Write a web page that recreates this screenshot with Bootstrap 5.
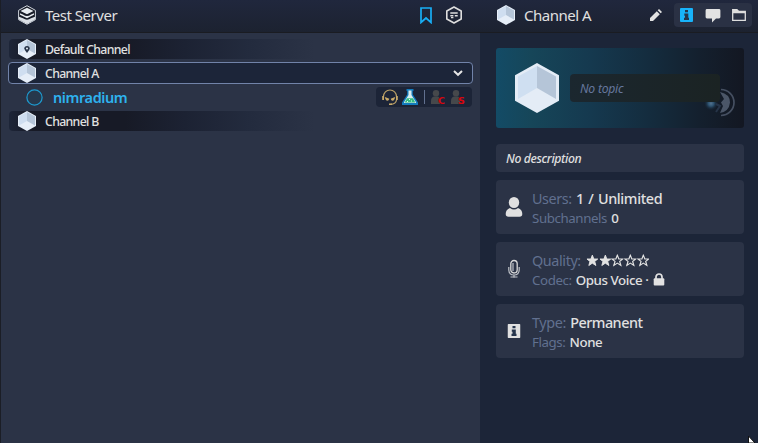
<!DOCTYPE html>
<html lang="en">
<head>
<meta charset="utf-8">
<meta name="viewport" content="width=device-width, initial-scale=1">
<title>Test Server</title>
<link href="https://cdn.jsdelivr.net/npm/bootstrap@5.3.0/dist/css/bootstrap.min.css" rel="stylesheet">
<style>
body{width:758px;height:443px;background:#1c2538;color:#e0e0e0;font-family:"Noto Sans","Open Sans",sans-serif;font-size:13px;line-height:18px}
svg{display:block;flex:none}
.tree-pane{width:480px;background:#2b3346;border-left:1px solid #1b1e26}
.bar{height:33px;background:linear-gradient(#20273d,#1c2230);border-bottom:1px solid #1a1c22}
.bar-title{font-size:15px;letter-spacing:-.48px;margin-left:9px;white-space:nowrap}
.tree-pane .bar{padding:0 17px 2px 17px}
.info-pane .bar{padding:0 6px 2px 17px}
.hex-btn{margin-left:13px}
.tree{padding:5px 7px}
.chan{height:20px;margin:1px 1px 3px;padding-left:9px;border-radius:4px;font-size:12.3px;letter-spacing:-.66px;background:linear-gradient(90deg,#1d2538 0,#171a26 5%,#171a26 25%,#1c2233 38%,#232b3e 52%,#2b3346 66%)}
.chan.selected{height:22px;margin:0 0 2px;border:1px solid #7183a9;background:#1c2539}
.chan-name{margin-left:9px;padding-top:2px;font-weight:500}
.client{height:22px;margin:0 1px 3px 18px}
.client-name{font-size:14.5px;font-weight:600;letter-spacing:-.42px;color:#2eb2ee;margin-left:10px}
.badges{height:20px;width:96px;background:#1c2437;border-radius:4px;padding:0 6px}
.badge-sep{width:1px;height:14px;background:#61708f}
.tabs{background:#2a3144;border-radius:4px;width:78px;height:24px;margin-left:12px;padding:0 6px}
.tab-active{color:#18b3fa}
.info-body{padding:15px 14px 0 16px}
.banner{height:80px;border-radius:3px;background:linear-gradient(90deg,#134b66 0,#164659 14%,#15394f 38%,#142c3e 62%,#14202e 82%,#131722 100%);padding-left:18px}
.topic{width:150px;height:28px;margin-left:10px;border-radius:4px;background:linear-gradient(90deg,#1b272f,#1b2323);color:#66779d;font-size:12.2px;letter-spacing:-.25px;padding:2px 0 0 10px;z-index:1}
.banner-mark{right:7px;top:39px}
.panel{background:#2b3346;border-radius:4px}
.desc{height:28px;margin-top:16px;padding:2px 0 0 10px;font-size:12.2px;font-weight:500;letter-spacing:-.36px}
.stat{height:54px;margin-top:8px;padding-left:9px}
.stat-text{margin-left:9px;padding-top:1px;white-space:nowrap}
.line1{font-size:14.4px;letter-spacing:-.5px;line-height:20px;font-weight:500}
.line2{font-size:13.3px;letter-spacing:-.42px;line-height:18px;font-weight:500}
.key{color:#61708f;font-weight:400;letter-spacing:-.4px;margin-right:1px}
.users{word-spacing:1px;letter-spacing:-.36px}
.stars{margin-left:4px}
.lock{margin-left:5px}
</style>
<script src="https://cdn.jsdelivr.net/npm/bootstrap@5.3.0/dist/js/bootstrap.bundle.min.js"></script>
</head>
<body class="d-flex overflow-hidden position-relative">
<svg width="0" height="0" class="position-absolute"><defs>
<symbol id="cube" viewBox="0 0 18 20"><path d="M9 0 18 5V15L9 20 0 15V5Z" fill="#e6eef8"/><path d="M9 1V10L1 14.6V5.5Z" fill="#cfdef0"/><path d="M9 1 17 5.5V14.6L9 10Z" fill="#b5c5d8"/></symbol>
<symbol id="star" viewBox="0 0 13 13"><path d="M6.5 1 8 5H12L8.9 7.4 10.1 11.6 6.5 9.2 2.9 11.6 4.1 7.4 1 5H5Z"/></symbol>
<symbol id="info" viewBox="0 0 13 14"><rect width="13" height="14" rx="1" fill="currentColor"/><path d="M5 2H8V4.3H5ZM4.3 5.5H8.3V9.8H9V12H4V9.8H5V7.7H4.3Z" fill="#26354c"/></symbol>
<symbol id="mute" viewBox="0 0 16 16"><circle cx="6" cy="4.3" r="3.2" fill="#46484b"/><path d="M1 15V12Q1 8 4 7.5H8Q10 8 10 11V15Z" fill="#46484b"/></symbol>
</defs></svg>

<main class="tree-pane d-flex flex-column">
  <header class="bar d-flex align-items-center">
    <svg width="18" height="20" viewBox="0 0 18 20"><path d="M9 .7 17.4 5.3V14.7L9 19.3.6 14.7V5.3Z" fill="#171b27" stroke="#cfd4dc" stroke-width="1"/><path d="M9 2.8 15.5 6 9 9.3 2.5 6Z" fill="#e7ebf0"/><path d="M2 8.3 5 9.6Q9 12.6 13 9.6L16 8.3V9.7L9 13.2 2 9.7Z" fill="#e7ebf0"/><path d="M1 11.7 5 13.3Q9 16 13 13.3L17 11.7V14.5L9 19 1 14.5Z" fill="#dce1e7"/></svg>
    <span class="bar-title">Test Server</span>
    <svg class="ms-auto" width="12" height="17" viewBox="0 0 12 17"><path d="M1 1H11V15.5L6 11 1 15.5Z" fill="none" stroke="#18aef5" stroke-width="1.7"/></svg>
    <svg class="hex-btn" width="18" height="18" viewBox="0 0 18 18"><path d="M9 1 16.2 5V13L9 17 1.8 13V5Z" fill="none" stroke="#dedede" stroke-width="1.6" stroke-linejoin="round"/><path d="M5.3 7H12.7M5.3 9.7H8.4M9.8 9.7H12.7M6 11.6H8.4" stroke="#dedede" stroke-width="1.4"/></svg>
  </header>
  <div class="tree flex-grow-1">
    <div class="chan d-flex align-items-center"><svg width="18" height="20" viewBox="0 0 18 20"><use href="#cube"/><path d="M9 14Q6.3 11 6.3 9.6A2.7 2.7 0 0 1 11.7 9.6Q11.7 11 9 14Z" fill="#273348"/><circle cx="9" cy="9.5" r="1" fill="#e6eef8"/></svg><span class="chan-name">Default Channel</span></div>
    <div class="chan selected d-flex align-items-center"><svg width="18" height="20"><use href="#cube"/></svg><span class="chan-name">Channel A</span><svg class="ms-auto me-2" width="12" height="8" viewBox="0 0 12 8"><path d="M2 2 6 5.8 10 2" fill="none" stroke="#e6e6e6" stroke-width="2"/></svg></div>
    <div class="client d-flex align-items-center">
      <svg width="17" height="17" viewBox="0 0 17 17"><circle cx="8.5" cy="8.5" r="7.6" fill="#26384c" stroke="#1d9bd0" stroke-width="1.2"/></svg>
      <span class="client-name">nimradium</span>
      <div class="badges ms-auto d-flex align-items-center">
        <svg width="16" height="17" viewBox="0 0 16 17"><path d="M1.5 9V7.5A6.5 6.5 0 0 1 14.5 7.5V9M14.5 11Q14 15 8.5 15.3" fill="none" stroke="#baa067" stroke-width="1.2"/><path d="M.2 7H2V11H.2ZM14 7H15.8V11H14ZM3 8 7.3 9.8Q6.8 12.4 4.5 11.6Q3 10.5 3 8ZM13 8 8.7 9.8Q9.2 12.4 11.5 11.6Q13 10.5 13 8ZM7 14.4H10V16H7Z" fill="#c9aa69"/></svg>
        <svg width="16" height="16" viewBox="0 0 16 16" class="ms-1"><path d="M4.5 0H11.5V2H10.8V5.5L16 13.5V16H0V13.5L5.2 5.5V2H4.5Z" fill="#137bbd"/><path d="M6.5 1.5H9.5V6L14 13.2V14H2V13.2L6.5 6Z" fill="#d9eef0"/><path d="M5 9.2H11L13.3 13.5H2.7Z" fill="#35bd83"/><path d="M7 10h1v1H7zM9 11.5h1v1H9zM5 12h1v1H5z" fill="#d6fff0"/></svg>
        <span class="badge-sep ms-auto"></span>
        <svg width="16" height="16" viewBox="0 0 16 16" class="ms-auto"><use href="#mute"/><text x="8" y="15" font-family="DejaVu Sans" font-size="9.5" font-weight="bold" fill="#d8060e">C</text></svg>
        <svg width="16" height="16" viewBox="0 0 16 16" class="ms-1"><use href="#mute"/><text x="8" y="15" font-family="DejaVu Sans" font-size="9.5" font-weight="bold" fill="#d8060e">S</text></svg>
      </div>
    </div>
    <div class="chan d-flex align-items-center"><svg width="18" height="20"><use href="#cube"/></svg><span class="chan-name">Channel B</span></div>
  </div>
</main>

<aside class="info-pane flex-grow-1">
  <header class="bar d-flex align-items-center">
    <svg width="18" height="20"><use href="#cube"/></svg>
    <span class="bar-title">Channel A</span>
    <svg class="ms-auto" width="12" height="12" viewBox="0 0 12 12"><path d="M0 12V9L6.8 2.2 9.8 5.2 3 12ZM7.7 1.3 9 0 12 3 10.7 4.3Z" fill="#e2e2e2"/></svg>
    <div class="tabs d-flex align-items-center justify-content-between">
      <svg class="tab-active" width="13" height="14"><use href="#info"/></svg>
      <svg width="16" height="15" viewBox="0 0 16 15"><path d="M2 1H14Q15.4 1 15.4 2.4V9Q15.4 10.4 14 10.4H11L7 14.5V10.4H2Q.6 10.4.6 9V2.4Q.6 1 2 1Z" fill="#e2e2e2"/></svg>
      <svg width="14" height="12" viewBox="0 0 14 12"><path d="M.7 11.3V.7H5L6.6 2.4H13.3V11.3Z" fill="none" stroke="#dedede" stroke-width="1.3"/><path d="M1 1H6L7 3H13V4.2H1Z" fill="#dedede"/></svg>
    </div>
  </header>
  <div class="info-body">
    <section class="banner d-flex align-items-center position-relative">
      <svg width="46" height="50" viewBox="0 0 46 50"><path d="M23 0 45 12.3V37.7L23 50 1 37.7V12.3Z" fill="#e4ecf6"/><path d="M23 3V25L4 36V13.5Z" fill="#cfdff1"/><path d="M23 3 42 13.5V36L23 25Z" fill="#b5c5d8"/></svg>
      <div class="topic position-relative d-flex align-items-center fst-italic">No topic</div>
      <svg class="banner-mark position-absolute" width="36" height="30" viewBox="0 0 36 30"><defs><radialGradient id="glow"><stop stop-color="#53738f"/><stop offset=".4" stop-color="#2d5270"/><stop offset="1" stop-color="#142434" stop-opacity="0"/></radialGradient></defs><circle cx="10" cy="16.5" r="7" fill="url(#glow)"/><path d="M20 2.5A12.7 12.7 0 0 1 20 28.5" fill="none" stroke="#454f61" stroke-width="1.7"/><path d="M19 5Q29 7 29 15.5 28 24.5 19 26L22 19 20 15.5 23 12Z" fill="#4b5668"/><path d="M15 17 19 19 15 25" fill="none" stroke="#263448" stroke-width="2"/></svg>
    </section>
    <section class="panel desc d-flex align-items-center fst-italic">No description</section>
    <section class="panel stat d-flex align-items-center">
      <svg width="18" height="20" viewBox="0 0 18 20"><ellipse cx="9" cy="5.5" rx="5.2" ry="5.5" fill="#e0e0e0"/><path d="M5 11Q9 14 13 11 17.3 12.5 17.3 17 17.3 19.8 14.5 19.8H3.5Q.7 19.8.7 17 .7 12.5 5 11Z" fill="#e0e0e0"/></svg>
      <div class="stat-text"><div class="line1"><span class="key">Users:</span> <span class="users">1 / Unlimited</span></div><div class="line2"><span class="key">Subchannels</span> 0</div></div>
    </section>
    <section class="panel stat d-flex align-items-center">
      <svg width="18" height="20" viewBox="0 0 18 20"><rect x="5.8" y="1.5" width="6.4" height="12.5" rx="3.2" fill="none" stroke="#dadada" stroke-width="1.3"/><path d="M8 4V12M3.8 8V11Q4 16 9 16 14 16 14.2 11V8M9 16V18.7M5.5 18H12.5" fill="none" stroke="#bfc2c8" stroke-width="1.2"/></svg>
      <div class="stat-text"><div class="line1 d-flex align-items-center"><span class="key">Quality:</span><span class="stars d-flex" aria-label="2 of 5"><svg width="12.7" height="13" viewBox="0 0 13 13" fill="#e2e2e2" stroke="#e2e2e2"><use href="#star"/></svg><svg width="12.7" height="13" viewBox="0 0 13 13" fill="#e2e2e2" stroke="#e2e2e2"><use href="#star"/></svg><svg width="12.7" height="13" viewBox="0 0 13 13" fill="none" stroke="#e2e2e2" stroke-width="1.2"><use href="#star"/></svg><svg width="12.7" height="13" viewBox="0 0 13 13" fill="none" stroke="#e2e2e2" stroke-width="1.2"><use href="#star"/></svg><svg width="12.7" height="13" viewBox="0 0 13 13" fill="none" stroke="#e2e2e2" stroke-width="1.2"><use href="#star"/></svg></span></div>
      <div class="line2 d-flex align-items-center"><span><span class="key">Codec:</span> Opus Voice ·</span><svg class="lock" width="12" height="13" viewBox="0 0 12 13"><path d="M3 6V4A3 3 0 0 1 9 4V6" fill="none" stroke="#e2e2e2" stroke-width="1.7"/><rect x=".7" y="5.2" width="10.6" height="7.3" rx="1" fill="#e2e2e2"/></svg></div></div>
    </section>
    <section class="panel stat d-flex align-items-center">
      <svg width="18" height="14" viewBox="0 0 18 14"><use href="#info" x="2.5" width="13" height="14"/></svg>
      <div class="stat-text"><div class="line1"><span class="key">Type:</span> Permanent</div><div class="line2"><span class="key">Flags:</span> None</div></div>
    </section>
  </div>
</aside>
<svg class="position-absolute bottom-0 end-0" width="10" height="7" viewBox="0 0 10 7"><path d="M.5 0V7H7Z" fill="#fff" stroke="#111" stroke-width="1"/></svg>
</body>
</html>
